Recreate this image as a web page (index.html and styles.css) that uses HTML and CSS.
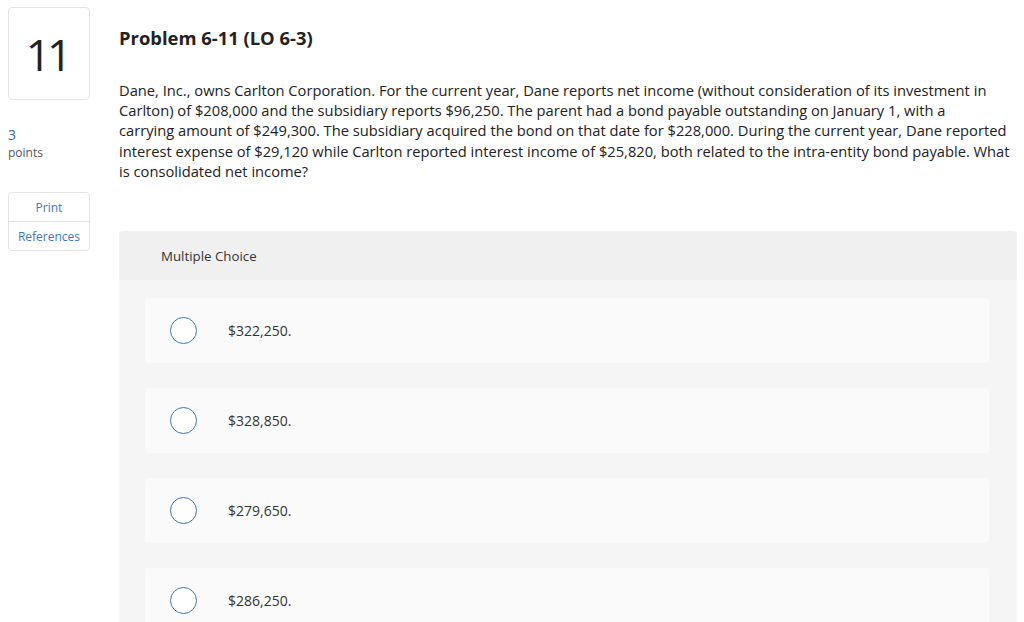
FILE: index.html
```html
<!DOCTYPE html>
<html>
<head>
<meta charset="utf-8">
<link rel="stylesheet" href="styles.css">
</head>
<body>
<div class="page">
  <aside class="side">
    <div class="qnum">11</div>
    <div class="points">
      <div class="pts-val">3</div>
      <div class="pts-label">points</div>
    </div>
    <div class="tools">
      <div class="tool">Print</div>
      <div class="tool">References</div>
    </div>
  </aside>
  <main class="main">
    <h1 class="title">Problem 6-11 (LO 6-3)</h1>
    <p class="text">Dane, Inc., owns Carlton Corporation. For the current year, Dane reports net income (without consideration of its investment in<br>Carlton) of $208,000 and the subsidiary reports $96,250. The parent had a bond payable outstanding on January 1, with a<br>carrying amount of $249,300. The subsidiary acquired the bond on that date for $228,000. During the current year, Dane reported<br>interest expense of $29,120 while Carlton reported interest income of $25,820, both related to the intra-entity bond payable. What<br>is consolidated net income?</p>
    <section class="mc">
      <div class="mc-head">Multiple Choice</div>
      <div class="mc-body">
        <div class="opt"><span class="radio"></span><span class="opt-text">$322,250.</span></div>
        <div class="opt"><span class="radio"></span><span class="opt-text">$328,850.</span></div>
        <div class="opt"><span class="radio"></span><span class="opt-text">$279,650.</span></div>
        <div class="opt"><span class="radio"></span><span class="opt-text">$286,250.</span></div>
      </div>
    </section>
  </main>
</div>
</body>
</html>
```
FILE: styles.css
```css
html, body {
  margin: 0;
  padding: 0;
  background: #fff;
  overflow: hidden;
}
body {
  font-family: "Open Sans", "Liberation Sans", sans-serif;
  color: #222;
  height: 622px;
}
.page {
  display: flex;
  gap: 29px;
  padding: 7px 7px 0 8px;
  height: 615px;
  overflow: hidden;
}
.side {
  width: 82px;
  flex: none;
  display: flex;
  flex-direction: column;
}
.qnum {
  height: 91px;
  border: 1px solid #e3e3e3;
  border-radius: 4px;
  display: flex;
  align-items: center;
  justify-content: center;
  font-size: 44px;
  color: #222;
  letter-spacing: -4px;
  padding-right: 4px;
}
.points {
  margin-top: 26px;
}
.pts-val {
  color: #2a6bb5;
  font-size: 14px;
  line-height: 18px;
}
.pts-label {
  color: #555;
  font-size: 12px;
  line-height: 17px;
}
.tools {
  margin-top: 31px;
  border: 1px solid #e3e3e3;
  border-radius: 4px;
}
.tool {
  height: 28px;
  display: flex;
  align-items: center;
  justify-content: center;
  font-size: 12px;
  color: #3a78c3;
}
.tool + .tool {
  border-top: 1px solid #e3e3e3;
}
.main {
  flex: 1;
  min-width: 0;
}
.title {
  margin: 19px 0 0;
  font-size: 18.4px;
  font-weight: 700;
  line-height: 24px;
  color: #222;
}
.text {
  margin: 30px 0 0;
  font-size: 14.7px;
  line-height: 20.2px;
  color: #222;
  white-space: nowrap;
}
.mc {
  margin-top: 50px;
  border-radius: 4px 4px 0 0;
  overflow: hidden;
}
.mc-head {
  background: #f0f0f0;
  height: 49px;
  padding-left: 42px;
  display: flex;
  align-items: center;
  font-size: 13.3px;
  color: #333;
}
.mc-body {
  background: #f5f5f5;
  padding: 18px 28px 20px 26px;
  display: flex;
  flex-direction: column;
  gap: 25px;
}
.opt {
  height: 65px;
  flex: none;
  background: #fafafa;
  border-radius: 4px;
  display: flex;
  align-items: center;
  padding-left: 25px;
}
.radio {
  width: 25px;
  height: 25px;
  border: 1.5px solid #3a75b5;
  border-radius: 50%;
  background: #fff;
  flex: none;
}
.opt-text {
  margin-left: 31px;
  font-size: 14px;
  color: #333;
}
```
